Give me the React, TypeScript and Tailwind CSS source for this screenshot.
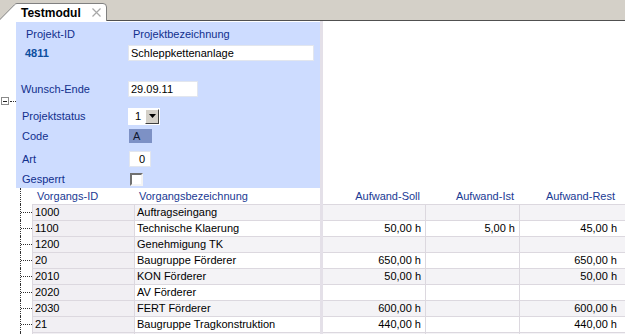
import React from "react";

const rows: [string, string, string, string, string][] = [
  ["1000", "Auftragseingang", "", "", ""],
  ["1100", "Technische Klaerung", "50,00 h", "5,00 h", "45,00 h"],
  ["1200", "Genehmigung TK", "", "", ""],
  ["20", "Baugruppe Förderer", "650,00 h", "", "650,00 h"],
  ["2010", "KON Förderer", "50,00 h", "", "50,00 h"],
  ["2020", "AV Förderer", "", "", ""],
  ["2030", "FERT Förderer", "600,00 h", "", "600,00 h"],
  ["21", "Baugruppe Tragkonstruktion", "440,00 h", "", "440,00 h"],
  ["", "", "", "", ""],
];

function Tab() {
  return (
    <div className="relative z-10 h-[18px] w-[108px] -mb-px">
      <svg className="absolute inset-0" width="108" height="18" viewBox="0 0 108 18">
        <path
          d="M -1.5 18 L 14.5 1.8 Q 15.5 0.5 17 0.5 L 103 0.5 Q 106.5 0.5 106.5 4 L 106.5 18"
          fill="#ffffff"
          stroke="#808080"
          strokeWidth="1"
        />
      </svg>
      <div className="relative flex h-full items-center pl-[21px] pt-px">
        <span className="text-[12px] font-bold leading-none text-black">Testmodul</span>
        <svg className="ml-[11px]" width="9" height="9" viewBox="0 0 9 9">
          <path d="M0.5 0.5 L8.5 8.5 M8.5 0.5 L0.5 8.5" stroke="#a8a8a8" strokeWidth="1.2" />
        </svg>
      </div>
    </div>
  );
}

function Input({ w, value, right }: { w: string; value: string; right?: boolean }) {
  return (
    <div
      className={`${w} flex h-[16px] items-center border border-[#e2e6ee] bg-white px-[2px] text-black ${
        right ? "justify-end pr-[5px]" : ""
      }`}
    >
      {value}
    </div>
  );
}

export default function App() {
  return (
    <div
      className="relative h-[334px] w-[625px] overflow-hidden bg-white text-[11px] leading-none"
      style={{ fontFamily: '"Liberation Sans", Arial, sans-serif' }}
    >
      {/* tab strip */}
      <div className="flex h-[21px] items-end border-b border-[#505050] bg-[#d4d0c8] pl-0">
        <Tab />
      </div>

      {/* form section */}
      <div className="flex h-[167px]">
        <div className="w-[16px] pt-[76px]">
          <div className="flex items-center">
            <div className="ml-px flex h-[8px] w-[8px] items-center justify-center border border-[#8a8a8a] bg-white">
              <div className="h-px w-[4px] bg-[#202020]" />
            </div>
            <div className="ml-px w-[6px] border-t border-dotted border-[#303030]" />
          </div>
        </div>
        <div className="mt-px flex h-[166px] w-[304px] flex-col bg-[#cddcff] text-[#112f8d]">
          <div className="mt-[4px] flex h-[16px] items-center">
            <div className="w-[112px] pl-[10px]">Projekt-ID</div>
            <div className="pl-[5px]">Projektbezeichnung</div>
          </div>
          <div className="mt-[3px] flex h-[16px] items-center">
            <div className="w-[112px] pl-[9px] font-bold text-[#0c4fa0]">4811</div>
            <Input w="w-[186px]" value="Schleppkettenanlage" />
          </div>
          <div className="mt-[20px] flex h-[16px] items-center">
            <div className="w-[112px] pl-[5px]">Wunsch-Ende</div>
            <Input w="w-[70px]" value="29.09.11" />
          </div>
          <div className="mt-[11px] flex h-[16px] items-center">
            <div className="w-[112px] pl-[6px]">Projektstatus</div>
            <div className="flex h-[17px] w-[32px] items-center justify-end bg-white pr-px">
              <span className="mr-[4px] text-black">1</span>
              <div className="flex h-[15px] w-[14px] items-center justify-center border border-t-white border-l-white border-b-[#404040] border-r-[#404040] bg-[#d4d0c8]">
                <svg width="7" height="4" viewBox="0 0 7 4">
                  <path d="M0 0 L7 0 L3.5 4 Z" fill="#000" />
                </svg>
              </div>
            </div>
          </div>
          <div className="mt-[4px] flex h-[16px] items-center">
            <div className="w-[112px] pl-[6px]">Code</div>
            <div className="ml-px flex h-[14px] w-[23px] items-center bg-[#7d91c5] pl-[4px] text-[#101830]">
              A
            </div>
          </div>
          <div className="mt-[7px] flex h-[16px] items-center">
            <div className="w-[112px] pl-[6px]">Art</div>
            <div className="ml-px">
              <Input w="w-[22px]" value="0" right />
            </div>
          </div>
          <div className="mt-[4px] flex h-[16px] items-center">
            <div className="w-[112px] pl-[6px]">Gesperrt</div>
            <div className="ml-[2px] h-[13px] w-[13px] border-2 border-t-[#707070] border-l-[#707070] border-b-[#f4f4f4] border-r-[#f4f4f4] bg-white" />
          </div>
        </div>
        <div className="w-[3px] bg-[#e4e0e8]" />
        <div className="flex-1 bg-white" />
      </div>

      {/* table header */}
      <div className="flex h-[16px] text-[#1a3a94]">
        <div className="flex h-full w-[32px] pl-[20px]">
          <div className="h-full border-l border-dotted border-[#303030]" />
        </div>
        <div className="flex w-[103px] items-center pl-[5px]">Vorgangs-ID</div>
        <div className="flex w-[185px] items-center pl-[4px]">Vorgangsbezeichnung</div>
        <div className="w-[3px] bg-[#e4e0e8]" />
        <div className="flex w-[103px] items-center justify-end pr-[6px]">Aufwand-Soll</div>
        <div className="flex w-[94px] items-center justify-end pr-[6px]">Aufwand-Ist</div>
        <div className="flex flex-1 items-center justify-end pr-[10px]">Aufwand-Rest</div>
      </div>

      {/* table rows */}
      {rows.map((r, i) => {
        const bg = i % 2 === 0 ? "bg-[#f4f3f6]" : "bg-white";
        return (
          <div key={i} className="flex h-[16px] text-black">
            <div className="flex h-full w-[32px] pl-[20px]">
              <div className="flex h-full items-center border-l border-dotted border-[#303030]">
                {r[0] !== "" && <div className="w-[11px] border-t border-dotted border-[#303030]" />}
              </div>
            </div>
            <div className="flex w-[103px] items-center border-l border-r border-t border-[#dcd8df] bg-[#f1eff3] pl-[2px]">
              {r[0]}
            </div>
            <div className={`flex w-[185px] items-center border-t border-[#dcd8df] pl-[2px] ${bg}`}>{r[1]}</div>
            <div className="w-[3px] bg-[#e4e0e8]" />
            <div className={`flex w-[103px] items-center justify-end border-r border-t border-[#dcd8df] pr-[4px] ${bg}`}>
              {r[2]}
            </div>
            <div className={`flex w-[94px] items-center justify-end border-r border-t border-[#dcd8df] pr-[4px] ${bg}`}>
              {r[3]}
            </div>
            <div className={`flex flex-1 items-center justify-end border-t border-[#dcd8df] pr-[8px] ${bg}`}>
              {r[4]}
            </div>
          </div>
        );
      })}
    </div>
  );
}
